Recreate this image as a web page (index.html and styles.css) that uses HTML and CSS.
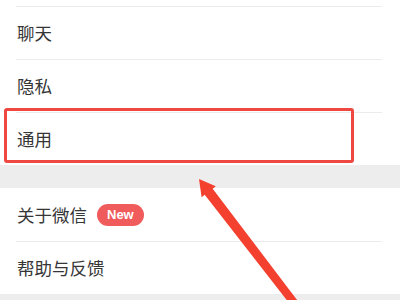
FILE: index.html
```html
<!DOCTYPE html>
<html lang="zh">
<head>
<meta charset="utf-8">
<title>设置</title>
<link rel="stylesheet" href="styles.css">
</head>
<body>
<div class="page">
  <div class="group">
    <div class="spacer"></div>
    <div class="row"><span class="label">聊天</span></div>
    <div class="row"><span class="label">隐私</span></div>
    <div class="row"><span class="label">通用</span></div>
  </div>
  <div class="group second">
    <div class="row first"><span class="label">关于微信</span><span class="badge">New</span></div>
    <div class="row"><span class="label">帮助与反馈</span></div>
  </div>
  <div class="highlight"></div>
  <svg class="arrow" width="400" height="300" viewBox="0 0 400 300">
    <polygon points="199,179 215.8,186.2 212.7,188.7 305.7,311.4 299.3,316.2 204.7,194.7 201.6,197.2" fill="#f4402f"/>
  </svg>
</div>
</body>
</html>
```
FILE: styles.css
```css
html, body {
  margin: 0;
  padding: 0;
}
body {
  background: #ededed;
  font-family: "Noto Sans CJK SC", "Noto Sans", sans-serif;
  color: #363636;
}
.page {
  position: relative;
  width: 400px;
  height: 300px;
  overflow: hidden;
}
.group {
  background: #ffffff;
}
.second {
  margin-top: 23px;
}
.spacer {
  height: 6px;
}
.row {
  height: 52px;
  margin: 0 18px 0 16px;
  padding-left: 1px;
  border-top: 1px solid #ececec;
  display: flex;
  align-items: center;
}
.row.first {
  border-top: none;
  height: 53px;
}
.label {
  font-size: 17.5px;
  line-height: 1;
}
.badge {
  margin-left: 10px;
  height: 22px;
  padding: 0 10px;
  border-radius: 11px;
  background: #f05b5b;
  color: #ffffff;
  font-family: "Liberation Sans", Arial, sans-serif;
  font-weight: bold;
  font-size: 13px;
  line-height: 22px;
}
.highlight {
  position: absolute;
  left: 4px;
  top: 108px;
  width: 344px;
  height: 49px;
  border: 3px solid #ee4840;
  border-radius: 3px;
}
.arrow {
  position: absolute;
  left: 0;
  top: 0;
}
```
